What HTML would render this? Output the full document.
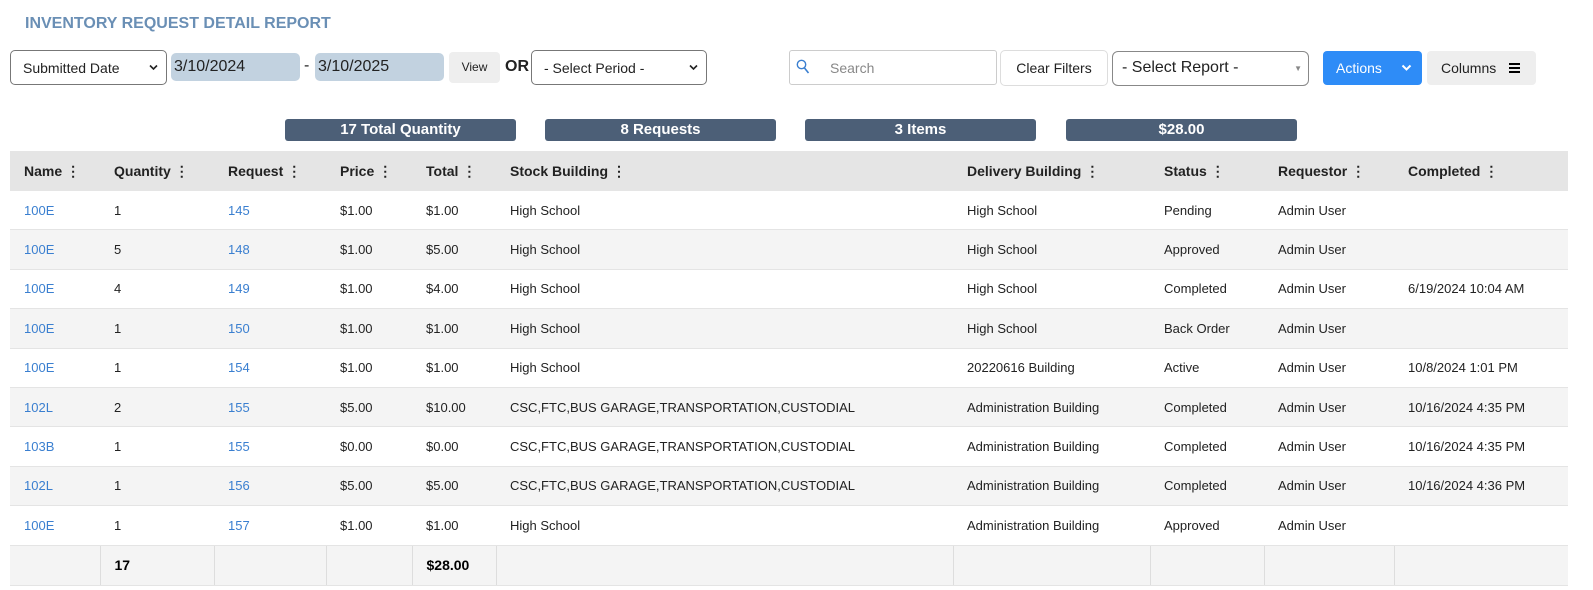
<!DOCTYPE html>
<html><head><style>
body{margin:0;width:1593px;height:590px;background:#fff;font-family:"Liberation Sans",Arial,sans-serif;position:relative;overflow:hidden;color:#222}
.a{position:absolute;box-sizing:border-box}
.title{left:25px;top:15px;font-size:16px;font-weight:bold;color:#6a8fb5}
.sel{border:1px solid #777;border-radius:5px;background:#fff;font-size:14px;display:flex;align-items:center;padding-left:12px}
.sel svg{position:absolute;right:8px;top:13px}
.date{background:#c2d2e0;border-radius:5px;font-size:16px;display:flex;align-items:center;padding-left:3px}
.badge{background:#4c5f77;color:#fff;font-weight:bold;font-size:15px;text-align:center;border-radius:3px;top:119px;height:22px;line-height:22px;width:231px}
table{position:absolute;left:10px;top:151px;border-collapse:collapse;table-layout:fixed;width:1558px;font-size:13px}
th{background:#e5e5e5;height:40px;text-align:left;padding:0 0 0 14px;font-size:14px;color:#222}
td{height:38.4px;padding:0 0 0 14px;border-bottom:1px solid #e4e4e4;white-space:nowrap}
tr:nth-child(even) td{background:#f4f4f4}
td.l{color:#3a7fd0}
tfoot td{background:#f4f4f4!important;border-left:1px solid #ddd;height:39px;font-weight:bold;font-size:14px;color:#000}
tfoot td:first-child{border-left:none}
.k{font-weight:bold;margin-left:4px}
</style></head><body>
<div class="a title">INVENTORY REQUEST DETAIL REPORT</div>
<div class="a sel" style="left:10px;top:50px;width:157px;height:35px">Submitted Date<svg width="9" height="7" viewBox="0 0 9 7"><path d="M1 1.5 L4.5 5 L8 1.5" fill="none" stroke="#222" stroke-width="1.6"/></svg></div>
<div class="a date" style="left:171px;top:53px;width:129px;height:28px">3/10/2024</div>
<div class="a" style="left:304px;top:57px;font-size:16px">-</div>
<div class="a date" style="left:315px;top:53px;width:129px;height:28px">3/10/2025</div>
<div class="a" style="left:449px;top:52px;width:51px;height:31px;background:#eee;border-radius:4px;font-size:12px;text-align:center;line-height:31px">View</div>
<div class="a" style="left:505px;top:58px;font-size:16px;font-weight:bold">OR</div>
<div class="a sel" style="left:531px;top:50px;width:176px;height:35px">- Select Period -<svg width="9" height="7" viewBox="0 0 9 7"><path d="M1 1.5 L4.5 5 L8 1.5" fill="none" stroke="#222" stroke-width="1.6"/></svg></div>
<div class="a" style="left:789px;top:50px;width:208px;height:35px;border:1px solid #ccc;border-radius:3px;font-size:14px;color:#888;padding:9px 0 0 40px">Search
<svg style="position:absolute;left:6px;top:8px" width="14" height="16" viewBox="0 0 14 16"><circle cx="5.5" cy="5.5" r="4.2" fill="none" stroke="#3a7fd0" stroke-width="1.4"/><line x1="8.5" y1="9" x2="12.5" y2="14" stroke="#3a7fd0" stroke-width="1.6"/></svg></div>
<div class="a" style="left:1000px;top:50px;width:108px;height:36px;border:1px solid #ddd;border-radius:5px;font-size:14px;text-align:center;line-height:34px">Clear Filters</div>
<div class="a" style="left:1112px;top:51px;width:197px;height:35px;border:1px solid #888;border-radius:6px;font-size:16px;padding:7px 0 0 9px">- Select Report -<span style="position:absolute;right:6px;top:12px;font-size:8px;color:#888">&#9660;</span></div>
<div class="a" style="left:1323px;top:51px;width:99px;height:34px;background:#2e8cf7;border-radius:4px;color:#fff;font-size:14px;line-height:34px;padding-left:13px">Actions
<svg style="position:absolute;left:78px;top:13px" width="11" height="8" viewBox="0 0 11 8"><path d="M1.5 1.5 L5.5 5.5 L9.5 1.5" fill="none" stroke="#fff" stroke-width="2"/></svg></div>
<div class="a" style="left:1427px;top:51px;width:109px;height:34px;background:#eee;border-radius:4px;font-size:14px;line-height:34px;padding-left:14px">Columns
<svg style="position:absolute;left:82px;top:12px" width="11" height="10" viewBox="0 0 11 10"><rect y="0" width="11" height="2"/><rect y="4" width="11" height="2"/><rect y="8" width="11" height="2"/></svg></div>
<div class="a badge" style="left:285px">17 Total Quantity</div>
<div class="a badge" style="left:545px">8 Requests</div>
<div class="a badge" style="left:805px">3 Items</div>
<div class="a badge" style="left:1066px">$28.00</div>
<table>
<colgroup><col style="width:90px"><col style="width:114px"><col style="width:112px"><col style="width:86px"><col style="width:84px"><col style="width:457px"><col style="width:197px"><col style="width:114px"><col style="width:130px"><col style="width:174px"></colgroup>
<thead><tr><th>Name<span class="k">&#8942;</span></th><th>Quantity<span class="k">&#8942;</span></th><th>Request<span class="k">&#8942;</span></th><th>Price<span class="k">&#8942;</span></th><th>Total<span class="k">&#8942;</span></th><th>Stock Building<span class="k">&#8942;</span></th><th>Delivery Building<span class="k">&#8942;</span></th><th>Status<span class="k">&#8942;</span></th><th>Requestor<span class="k">&#8942;</span></th><th>Completed<span class="k">&#8942;</span></th></tr></thead>
<tbody>
<tr><td class="l">100E</td><td>1</td><td class="l">145</td><td>$1.00</td><td>$1.00</td><td>High School</td><td>High School</td><td>Pending</td><td>Admin User</td><td></td></tr>
<tr><td class="l">100E</td><td>5</td><td class="l">148</td><td>$1.00</td><td>$5.00</td><td>High School</td><td>High School</td><td>Approved</td><td>Admin User</td><td></td></tr>
<tr><td class="l">100E</td><td>4</td><td class="l">149</td><td>$1.00</td><td>$4.00</td><td>High School</td><td>High School</td><td>Completed</td><td>Admin User</td><td>6/19/2024 10:04 AM</td></tr>
<tr><td class="l">100E</td><td>1</td><td class="l">150</td><td>$1.00</td><td>$1.00</td><td>High School</td><td>High School</td><td>Back Order</td><td>Admin User</td><td></td></tr>
<tr><td class="l">100E</td><td>1</td><td class="l">154</td><td>$1.00</td><td>$1.00</td><td>High School</td><td>20220616 Building</td><td>Active</td><td>Admin User</td><td>10/8/2024 1:01 PM</td></tr>
<tr><td class="l">102L</td><td>2</td><td class="l">155</td><td>$5.00</td><td>$10.00</td><td>CSC,FTC,BUS GARAGE,TRANSPORTATION,CUSTODIAL</td><td>Administration Building</td><td>Completed</td><td>Admin User</td><td>10/16/2024 4:35 PM</td></tr>
<tr><td class="l">103B</td><td>1</td><td class="l">155</td><td>$0.00</td><td>$0.00</td><td>CSC,FTC,BUS GARAGE,TRANSPORTATION,CUSTODIAL</td><td>Administration Building</td><td>Completed</td><td>Admin User</td><td>10/16/2024 4:35 PM</td></tr>
<tr><td class="l">102L</td><td>1</td><td class="l">156</td><td>$5.00</td><td>$5.00</td><td>CSC,FTC,BUS GARAGE,TRANSPORTATION,CUSTODIAL</td><td>Administration Building</td><td>Completed</td><td>Admin User</td><td>10/16/2024 4:36 PM</td></tr>
<tr><td class="l">100E</td><td>1</td><td class="l">157</td><td>$1.00</td><td>$1.00</td><td>High School</td><td>Administration Building</td><td>Approved</td><td>Admin User</td><td></td></tr>
</tbody>
<tfoot><tr><td></td><td>17</td><td></td><td></td><td>$28.00</td><td></td><td></td><td></td><td></td><td></td></tr></tfoot>
</table>
</body></html>
